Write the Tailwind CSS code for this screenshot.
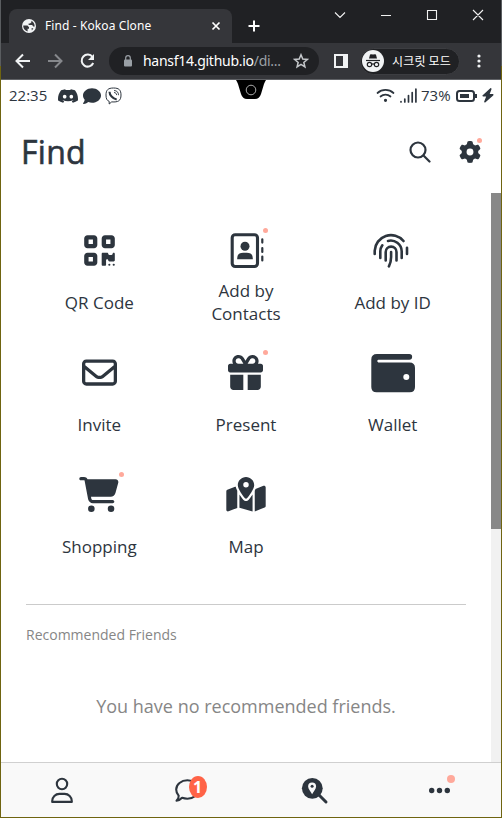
<!DOCTYPE html>
<html lang="en">
<head>
<meta charset="utf-8">
<title>Find - Kokoa Clone</title>
<script src="https://cdn.jsdelivr.net/npm/@tailwindcss/browser@4"></script>
</head>
<body class="w-[502px] h-[818px] overflow-hidden bg-[linear-gradient(#5a5d60_66px,#6f6410_66px)] px-px pb-px font-['Open_Sans','Noto_Sans_CJK_KR',sans-serif] text-[#2d353e]">
<div class="flex flex-col w-[500px] h-[817px] bg-white overflow-hidden">

  <!-- Browser window -->
  <div class="h-20 shrink-0 flex flex-col bg-[#202124] border-b border-[#606266] text-white">
    <div class="flex h-[43px]">
      <div class="relative ml-2 mt-[9px] w-[223px] h-[34px] bg-[#35363a] rounded-t-lg flex items-center">
        <svg class="ml-[13px] w-[14px] h-[14px]" viewBox="0 0 14 14"><circle cx="7" cy="7" r="7" fill="#f1f3f4"/><path d="M1.3 6.6h4.2l1.5 1.6v1.6H5.6v2.6C3 11.700 1 9.500 1.300 6.600zM9.400 1.800v1.500L8 4.600H6.600v1.500h3.600l1 1.300h1.500C12.600 4.700 11.500 2.700 9.400 1.800zM9.500 9.300h1.900l-1.500 2.200z" fill="#35363a"/></svg>
        <div class="ml-[9px] w-[166px] text-[12px] leading-4 font-['Noto_Sans'] tracking-[0.1px]">Find - Kokoa Clone</div>
        <svg class="w-2.5 h-2.5" viewBox="0 0 10 10"><path d="M1.500 1.500l7 7M8.500 1.500l-7 7" stroke="#fff" stroke-width="1.700"/></svg>
      </div>
      <svg class="mt-5 ml-4 w-3 h-3" viewBox="0 0 12 12"><path d="M6 .5v11M.5 6h11" stroke="#fff" stroke-width="2"/></svg>
      <svg class="mt-2 ml-[72px] w-[156px] h-[14px]" viewBox="0 0 156 14" fill="none" stroke="#f1f1f1" stroke-width="1.100"><path d="M3 4.500l5 5 5-5M49 7.500h10M95.500 2.500h9v9h-9zM141 2l10 10M151 2l-10 10"/></svg>
    </div>
    <div class="flex items-center h-9 bg-[#35363a]">
      <svg class="ml-3.5 w-[84px] h-5" viewBox="0 0 84 20" fill="none" stroke="#f1f3f4" stroke-width="2"><path d="M15 10H2M8 3.500L1.500 10 8 16.500"/><path d="M33 10h13M40 3.500l6.500 6.500-6.500 6.500" stroke="#86888c"/><path d="M77.500 6A6 6 0 1 0 78.200 12"/><path d="M79 3v6h-6z" fill="#f1f3f4" stroke="none"/></svg>
      <div class="ml-[10px] w-[210px] h-7 rounded-full bg-[#202124] flex items-center">
        <svg class="ml-3.5 w-2.5 h-3" viewBox="0 0 10 12"><rect x="1" y="4.500" width="8" height="7" rx="1" fill="#9aa0a6"/><path d="M2.700 5V3a2.300 2.300 0 0 1 4.600 0v2" fill="none" stroke="#9aa0a6" stroke-width="1.200"/></svg>
        <div class="ml-[10px] w-[147px] text-[14px] leading-5 font-['Noto_Sans'] whitespace-nowrap tracking-[-0.02em]">hansf14.github.io<span class="text-[#9aa0a6]">/di...</span></div>
        <svg class="ml-[3px] w-4 h-4" viewBox="0 0 18 18"><path d="M9 2l2 4.800 5.100.4-3.900 3.400 1.200 5L9 12.900l-4.400 2.700 1.200-5-3.900-3.400L7 6.800z" fill="none" stroke="#c4c7ca" stroke-width="1.700"/></svg>
      </div>
      <svg class="ml-[15px] w-3.5 h-3.5" viewBox="0 0 14 14"><path d="M1 1h12v12H1z" fill="none" stroke="#f1f3f4" stroke-width="2"/><path d="M9 0h5v14H9z" fill="#f1f3f4"/></svg>
      <div class="ml-[12px] w-[100px] h-[27px] rounded-full bg-[#202124] border border-[#3c3d41] flex items-center">
        <svg class="ml-px w-[22px] h-[22px]" viewBox="0 0 22 22"><circle cx="11" cy="11" r="11" fill="#f1f3f4"/><g stroke="#202124" fill="none" stroke-width="1.200"><path d="M4 10.500h14"/><circle cx="7.500" cy="14.500" r="2.200"/><circle cx="14.500" cy="14.500" r="2.200"/><path d="M9.700 14h2.600"/></g><path d="M7 8.600l1-3.800q.3-.8 1-.6l2 .4 2-.4q.7-.2 1 .6l1 3.800z" fill="#202124"/></svg>
        <div class="ml-2 text-[12px] leading-4 font-['Noto_Sans_CJK_KR'] whitespace-nowrap tracking-[0.2px]">시크릿 모드</div>
      </div>
      <svg class="ml-[17px] w-1 h-3.5" viewBox="0 0 4 14" fill="#f1f3f4"><circle cx="2" cy="2" r="1.600"/><circle cx="2" cy="7" r="1.600"/><circle cx="2" cy="12" r="1.600"/></svg>
    </div>
  </div>

  <!-- Phone status bar -->
  <div class="relative h-8 shrink-0 flex items-center pl-2 pb-px text-[15px]">
    <div class="w-[38px] leading-[31px]">22:35</div>
    <svg class="ml-[11px] w-[20px] h-[18px]" viewBox="0 0 16 16" preserveAspectRatio="none" fill="currentColor"><path d="M13.545 2.907a13.227 13.227 0 0 0-3.257-1.011.05.05 0 0 0-.052.025c-.141.25-.297.577-.406.833a12.190 12.190 0 0 0-3.658 0 8.258 8.258 0 0 0-.412-.833.051.051 0 0 0-.052-.025c-1.125.194-2.220.534-3.257 1.011a.041.041 0 0 0-.021.018C.356 6.024-.213 9.047.066 12.032c.001.014.010.028.021.037a13.276 13.276 0 0 0 3.995 2.020.050.050 0 0 0 .056-.019c.308-.420.582-.863.818-1.329a.050.050 0 0 0-.010-.059.051.051 0 0 0-.018-.011 8.875 8.875 0 0 1-1.248-.595.050.050 0 0 1-.020-.066.051.051 0 0 1 .015-.019c.084-.063.168-.129.248-.195a.050.050 0 0 1 .051-.007c2.619 1.196 5.454 1.196 8.041 0a.052.052 0 0 1 .053.007c.080.066.164.132.248.195a.051.051 0 0 1-.004.085 8.254 8.254 0 0 1-1.249.594.050.050 0 0 0-.030.030.052.052 0 0 0 .003.041c.240.465.515.909.817 1.329a.050.050 0 0 0 .056.019 13.235 13.235 0 0 0 4.001-2.020.049.049 0 0 0 .021-.037c.334-3.451-.559-6.449-2.366-9.106a.034.034 0 0 0-.020-.019Zm-8.198 7.307c-.789 0-1.438-.724-1.438-1.612 0-.889.637-1.613 1.438-1.613.807 0 1.450.730 1.438 1.613 0 .888-.637 1.612-1.438 1.612Zm5.316 0c-.788 0-1.438-.724-1.438-1.612 0-.889.637-1.613 1.438-1.613.807 0 1.451.730 1.438 1.613 0 .888-.631 1.612-1.438 1.612Z"/></svg>
    <svg class="ml-[5px] w-[18px] h-[18px]" viewBox="0 0 512 512" fill="currentColor"><path d="M512 240c0 114.900-114.600 208-256 208c-37.100 0-72.300-6.400-104.100-17.900c-11.900 8.700-31.300 20.600-54.300 30.600C73.600 471.100 44.700 480 16 480c-6.500 0-12.300-3.900-14.800-9.900c-2.500-6-1.100-12.800 3.400-17.400l.3-.3c.3-.3 .7-.7 1.300-1.400c1.100-1.200 2.800-3.100 4.900-5.700c4.100-5 9.600-12.400 15.200-21.600c10-16.600 19.500-38.400 21.400-62.900C17.700 326.800 0 285.100 0 240C0 125.100 114.600 32 256 32s256 93.100 256 208z"/></svg>
    <svg class="ml-[4px] w-[17px] h-[18px]" viewBox="0 0 17 18" fill="none" stroke="currentColor"><path d="M8.500 1C3 1 1 3 1 8c0 3.500.8 5.500 3.200 6.400V17l2.500-2.100c6.500.4 9.300-1 9.300-6.900C16 3 14 1 8.500 1z"/><path d="M4.500 4.800c0 3.200 3.200 6.900 7.200 7.700" stroke-width="2.100"/><path d="M9 3.500c3 .2 4.500 1.700 4.500 4.700M9 5.500c1.700.1 2.600 1 2.600 2.600" stroke-width=".9"/></svg>

    <svg class="absolute left-[235px] top-0 w-[30px] h-[19px]" viewBox="0 0 30 19"><path d="M0 0h30q-1 1.500-2 4l-3 10q-1.600 5-6 5h-8q-4.400 0-6-5L2 4Q1 1.500 0 0z" fill="#000"/><circle cx="15" cy="10" r="4.800" fill="none" stroke="#aaa"/></svg>

    <svg class="ml-auto w-[19px] h-[15px]" viewBox="0 0 18 15" fill="none" stroke="currentColor" stroke-width="1.700" stroke-linecap="round"><path d="M1 5a12 12 0 0 1 16 0M4 8.500a7.500 7.500 0 0 1 10 0"/><circle cx="9" cy="12.300" r="1" fill="currentColor" stroke-width="1.200"/></svg>
    <svg class="ml-[5px] w-[17px] h-[15px]" viewBox="0 0 17 15" stroke="currentColor" stroke-width="1.700" stroke-linecap="round"><path d="M1 13.500v.5M4.800 11v3M8.500 7.500V14M12.200 4.500v9.500M15.900 1.200V14"/></svg>
    <div class="ml-[4px] w-[30px] leading-[31px]">73%</div>
    <svg class="ml-[5px] w-[21px] h-[12px]" viewBox="0 0 21 12"><rect x="1" y="1" width="17" height="10" rx="2.500" fill="none" stroke="currentColor" stroke-width="2"/><path d="M4 4h9v4H4z" fill="currentColor"/><path d="M20 4v4" stroke="currentColor" stroke-width="2"/></svg>
    <svg class="ml-[5px] mr-[7px] w-[12px] h-[15px]" viewBox="0 0 12 15" fill="currentColor"><path d="M8.300.2L.7 7.200q-.8.900.3 1.300h3.200L2.200 13.400q-.3 1.300 1 1L11.200 7.400q.8-1-.4-1.400H7.700L9.500 1.300Q9.500-.2 8.300.2z"/></svg>
  </div>

  <!-- Screen header -->
  <header class="h-[81px] shrink-0 flex items-center pl-[20px] pr-[20px] pb-0.5">
    <h1 class="text-[32px] font-normal leading-[79px] tracking-[0.3px] [-webkit-text-stroke:0.6px_#2d353e]">Find</h1>
    <svg class="ml-auto w-[22px] h-[22px]" viewBox="0 0 22 22" fill="none" stroke="currentColor" stroke-width="2.200" stroke-linecap="round"><circle cx="9" cy="9" r="7.500"/><path d="M14.500 14.500l6 6"/></svg>
    <div class="relative ml-[28px] w-[22px] h-[22px]">
      <svg class="w-[22px] h-[22px]" viewBox="0 0 512 512" fill="currentColor"><path d="M495.900 166.600c3.200 8.700 .5 18.400-6.400 24.600l-43.300 39.400c1.100 8.300 1.700 16.800 1.700 25.400s-.6 17.100-1.700 25.400l43.300 39.400c6.900 6.200 9.600 15.900 6.400 24.600c-4.400 11.900-9.700 23.300-15.800 34.300l-4.700 8.100c-6.600 11-14 21.400-22.100 31.200c-5.900 7.200-15.700 9.600-24.500 6.800l-55.700-17.700c-13.400 10.300-28.200 18.900-44 25.400l-12.500 57.100c-2 9.100-9 16.300-18.200 17.800c-13.800 2.300-28 3.500-42.500 3.500s-28.700-1.200-42.500-3.500c-9.200-1.500-16.200-8.700-18.200-17.800l-12.500-57.100c-15.800-6.500-30.600-15.100-44-25.400L83.100 425.900c-8.800 2.800-18.600 .3-24.500-6.800c-8.100-9.800-15.500-20.200-22.100-31.200l-4.700-8.100c-6.100-11-11.400-22.400-15.800-34.300c-3.200-8.700-.5-18.400 6.400-24.600l43.300-39.400C64.600 273.100 64 264.600 64 256s.6-17.100 1.700-25.400L22.400 191.200c-6.900-6.200-9.600-15.900-6.400-24.600c4.400-11.900 9.700-23.300 15.800-34.300l4.700-8.100c6.600-11 14-21.400 22.100-31.200c5.900-7.200 15.700-9.600 24.500-6.800l55.700 17.700c13.400-10.300 28.200-18.900 44-25.400l12.500-57.100c2-9.100 9-16.300 18.200-17.800C227.300 1.200 241.500 0 256 0s28.700 1.200 42.500 3.500c9.200 1.500 16.200 8.700 18.200 17.800l12.500 57.100c15.800 6.500 30.600 15.100 44 25.400l55.700-17.700c8.800-2.800 18.600-.3 24.500 6.800c8.100 9.800 15.500 20.200 22.100 31.200l4.700 8.100c6.100 11 11.400 22.400 15.800 34.300zM256 336a80 80 0 1 0 0-160 80 80 0 1 0 0 160z"/></svg>
      <span class="absolute left-[18px] top-[-3px] size-[5px] rounded-full bg-[#ffa99b]"></span>
    </div>
  </header>

  <!-- Scrollable content -->
  <div class="flex flex-1 min-h-0">
    <main class="w-[490px] pl-[25px] pr-[25px] pt-7">
      <div class="grid grid-cols-3 auto-rows-[122px] text-[17px] leading-[23px] text-center">
        <div class="flex flex-col items-center">
          <div class="h-[59px] flex items-center"><svg class="w-[31px] h-[35px]" viewBox="0 0 448 512" fill="currentColor"><path d="M0 80C0 53.500 21.500 32 48 32h96c26.500 0 48 21.500 48 48v96c0 26.500-21.500 48-48 48H48c-26.500 0-48-21.500-48-48V80zM64 96v64h64V96H64zM0 336c0-26.500 21.500-48 48-48h96c26.500 0 48 21.500 48 48v96c0 26.500-21.500 48-48 48H48c-26.500 0-48-21.500-48-48V336zm64 16v64h64V352H64zM304 32h96c26.500 0 48 21.500 48 48v96c0 26.500-21.500 48-48 48H304c-26.500 0-48-21.500-48-48V80c0-26.500 21.500-48 48-48zm80 64H320v64h64V96zM256 304c0-8.800 7.200-16 16-16h64c8.800 0 16 7.200 16 16s7.200 16 16 16h32c8.800 0 16-7.200 16-16s7.200-16 16-16s16 7.200 16 16v96c0 8.800-7.200 16-16 16H368c-8.800 0-16-7.200-16-16s-7.200-16-16-16s-16 7.200-16 16v64c0 8.800-7.200 16-16 16H272c-8.800 0-16-7.200-16-16V304zM368 480a16 16 0 1 1 0-32 16 16 0 1 1 0 32zm64 0a16 16 0 1 1 0-32 16 16 0 1 1 0 32z"/></svg></div>
          <div class="h-[44px] flex items-center">QR Code</div>
        </div>
        <div class="flex flex-col items-center">
          <div class="relative h-[59px]"><svg class="w-[60px] h-[60px]" viewBox="0 0 60 60" fill="none" stroke="currentColor"><rect x="16.200" y="13.800" width="25.300" height="31.700" rx="3" stroke-width="3.100"/><path d="M46.300 18.300v3.300M46.300 27v4M46.300 35.500v4" stroke-width="2.200" stroke-linecap="round"/><circle cx="29" cy="25.300" r="4.500" fill="currentColor" stroke="none"/><path d="M21.200 38.300q-.4-6.600 6-6.600h3.600q6.400 0 6 6.600z" fill="currentColor" stroke="none"/></svg><span class="absolute left-[47px] top-[7px] size-[5px] rounded-full bg-[#ffa99b]"></span></div>
          <div class="h-[44px] flex items-center">Add by<br>Contacts</div>
        </div>
        <div class="flex flex-col items-center">
          <div class="h-[59px]"><svg class="w-[60px] h-[60px]" viewBox="0 0 60 60" fill="none" stroke="currentColor" stroke-width="2.600" stroke-linecap="round"><path d="M11.700 33V29.700A16.300 16.300 0 0 1 40.500 20M17.300 37V30.300a11 11 0 0 1 2-6M25 19.900a11 11 0 0 1 13.700 10.400V37M22.700 39.500V31a5.400 5.400 0 0 1 10.800 0V39.500M28.100 31V36q0 5-2.200 9.300M44 26.800V33"/></svg></div>
          <div class="h-[44px] flex items-center">Add by ID</div>
        </div>
        <div class="flex flex-col items-center">
          <div class="h-[59px] flex items-center"><svg class="w-[35px] h-[35px]" viewBox="0 0 512 512" fill="currentColor"><path d="M64 112c-8.800 0-16 7.200-16 16v22.100L220.500 291.700c20.700 17 50.400 17 71.100 0L464 150.100V128c0-8.800-7.200-16-16-16H64zM48 212.200V384c0 8.800 7.200 16 16 16H448c8.800 0 16-7.200 16-16V212.200L322 328.800c-38.400 31.500-93.700 31.500-132 0L48 212.200zM0 128C0 92.700 28.700 64 64 64H448c35.300 0 64 28.700 64 64V384c0 35.300-28.700 64-64 64H64c-35.300 0-64-28.700-64-64V128z"/></svg></div>
          <div class="h-[44px] flex items-center">Invite</div>
        </div>
        <div class="flex flex-col items-center">
          <div class="relative w-[60px] h-[59px] flex items-center justify-center"><svg class="w-[35px] h-[35px]" viewBox="0 0 512 512" fill="currentColor"><path d="M190.500 68.800L225.300 128H224 152c-22.100 0-40-17.900-40-40s17.900-40 40-40h2.200c14.900 0 28.800 7.900 36.300 20.800zM64 88c0 14.400 3.500 28 9.600 40H32c-17.700 0-32 14.300-32 32v64c0 17.700 14.300 32 32 32H480c17.700 0 32-14.300 32-32V160c0-17.700-14.300-32-32-32H438.400c6.100-12 9.600-25.600 9.600-40c0-48.600-39.400-88-88-88h-2.200c-31.900 0-61.500 16.900-77.700 44.400L256 85.500l-24.100-41C215.700 16.900 186.100 0 154.200 0H152C103.400 0 64 39.400 64 88zm336 0c0 22.100-17.900 40-40 40H288h-1.300l34.800-59.200C329.100 55.900 342.900 48 357.800 48H360c22.100 0 40 17.900 40 40zM32 288V464c0 26.500 21.500 48 48 48H224V288H32zM288 512H432c26.500 0 48-21.500 48-48V288H288V512z"/></svg><span class="absolute left-[47px] top-[7px] size-[5px] rounded-full bg-[#ffa99b]"></span></div>
          <div class="h-[44px] flex items-center">Present</div>
        </div>
        <div class="flex flex-col items-center">
          <div class="h-[59px]"><svg class="w-[60px] h-[60px]" viewBox="0 0 60 60" fill="currentColor"><path fill-rule="evenodd" d="M14 11H46.300a2.800 2.800 0 0 1 0 5.700H15.300a1.400 1.400 0 0 0 0 2.700H46.500q5.500 0 5.500 5.500V44q0 5.300-5.300 5.300H13.600q-5.300 0-5.300-5.300V16.500Q8.300 11 14 11zM43.300 31a3 3 0 1 0 0 6 3 3 0 1 0 0-6z"/></svg></div>
          <div class="h-[44px] flex items-center">Wallet</div>
        </div>
        <div class="flex flex-col items-center">
          <div class="relative w-[60px] h-[59px] flex items-center justify-center"><svg class="w-[40px] h-[35px]" viewBox="0 0 576 512" fill="currentColor"><path d="M0 24C0 10.700 10.700 0 24 0H69.500c22 0 41.500 12.800 50.600 32h411c26.300 0 45.500 25 38.600 50.400l-41 152.300c-8.500 31.400-37 53.300-69.500 53.300H170.700l5.400 28.500c2.200 11.300 12.100 19.500 23.600 19.500H488c13.300 0 24 10.700 24 24s-10.700 24-24 24H199.700c-34.600 0-64.300-24.600-70.700-58.500L77.400 54.500c-.7-3.800-4-6.500-7.900-6.500H24C10.700 48 0 37.300 0 24zM128 464a48 48 0 1 1 96 0 48 48 0 1 1 -96 0zm336-48a48 48 0 1 1 0 96 48 48 0 1 1 0-96z"/></svg><span class="absolute left-[50px] top-[7px] size-[5px] rounded-full bg-[#ffa99b]"></span></div>
          <div class="h-[44px] flex items-center">Shopping</div>
        </div>
        <div class="flex flex-col items-center">
          <div class="h-[59px] flex items-center"><svg class="w-[40px] h-[35px]" viewBox="0 0 576 512" fill="currentColor"><path d="M408 120c0 54.600-73.100 151.900-105.200 192c-7.700 9.600-22 9.600-29.600 0C241.100 271.900 168 174.600 168 120C168 53.700 221.700 0 288 0s120 53.700 120 120zm8 80.400c3.500-6.900 6.700-13.800 9.600-20.600c.5-1.200 1-2.500 1.500-3.700l116-46.400C558.900 123.400 576 135 576 152V422.800c0 9.800-6 18.600-15.100 22.300L416 503V200.400zM137.600 138.300c2.400 14.100 7.200 28.300 12.800 41.500c2.900 6.800 6.100 13.700 9.600 20.600V451.800L32.900 502.700C17.100 509 0 497.400 0 480.400V209.600c0-9.800 6-18.600 15.100-22.300l122.600-49zM327.800 332c13.900-17.400 35.700-45.700 56.200-77V504.300L192 449.400V255c20.500 31.300 42.300 59.600 56.200 77c20.500 25.600 59.100 25.600 79.600 0zM288 152a40 40 0 1 0 0-80 40 40 0 1 0 0 80z"/></svg></div>
          <div class="h-[44px] flex items-center">Map</div>
        </div>
      </div>
      <section class="mt-[17px] border-t border-[#cbcbcb] pt-5 text-[#868686]">
        <h2 class="text-[14px] leading-5">Recommended Friends</h2>
        <p class="mt-[49px] text-[18px] leading-6 text-center whitespace-nowrap">You have no recommended friends.</p>
      </section>
    </main>
    <div class="w-[10px] bg-[#f1f1f1]"><div class="h-[336px] bg-[#888]"></div></div>
  </div>

  <!-- Tab bar -->
  <nav class="h-[55px] shrink-0 grid grid-cols-4 justify-items-center bg-[#f9f9f9] border-t border-[#d0d0d0]">
    <svg class="w-[60px] h-[54px]" viewBox="0 0 60 54" fill="none" stroke="currentColor" stroke-width="2.100" stroke-linejoin="round"><circle cx="28" cy="21" r="5.200"/><path d="M18.200 38.900v-.8a7.200 7.200 0 0 1 7.200-7.200h5.200a7.200 7.200 0 0 1 7.200 7.200v.8z"/></svg>
    <div class="relative w-[60px] h-[54px]">
      <svg class="w-[60px] h-[54px]" viewBox="0 0 60 54" fill="none" stroke="currentColor" stroke-width="2.100" stroke-linejoin="round"><path d="M17.500 37.700c1.700-1.700 2.400-3.400 2.200-5-1.800-1.800-2.500-3.700-2.500-6.200 0-5.100 5-9.200 11.200-9.200s11.200 4.100 11.200 9.200-5 9.200-11.200 9.200c-2 0-3.700-.3-5.300-.9-1.500 1.600-3.500 2.700-5.600 2.900z"/></svg>
      <span class="absolute left-[30px] top-[13px] w-[18px] h-[22px] rounded-[50%] bg-[#ff6347] text-white text-[16px] leading-[22px] font-bold text-center">1</span>
    </div>
    <svg class="w-[60px] h-[54px]" viewBox="0 0 60 54"><circle cx="28.300" cy="25.300" r="10.400" fill="currentColor"/><path d="M35 32l7 7" stroke="currentColor" stroke-width="3" stroke-linecap="round"/><path d="M28.100 31.300c-1-2.200-4-5.200-4-7.800a4 4 0 0 1 8 0c0 2.600-3 5.600-4 7.800z" fill="#f9f9f9"/><circle cx="28.100" cy="23.300" r="1.500" fill="currentColor"/></svg>
    <svg class="w-[60px] h-[54px]" viewBox="0 0 60 54" fill="currentColor"><circle cx="22.700" cy="27.500" r="2.700"/><circle cx="30.500" cy="27.500" r="2.700"/><circle cx="38.300" cy="27.500" r="2.700"/><circle cx="42" cy="16" r="4" fill="#ffa99b"/></svg>
  </nav>
</div>
</body>
</html>
